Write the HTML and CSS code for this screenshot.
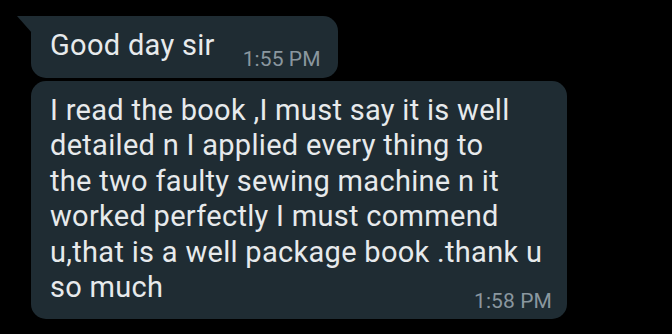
FILE: index.html
```html
<!DOCTYPE html>
<html>
<head>
<meta charset="utf-8">
<link rel="stylesheet" href="styles.css">
</head>
<body>
<div class="chat">
  <div class="bubble first">
    <svg class="tail" width="15" height="17" viewBox="0 0 15 17"><path d="M0 0 H15 V17 Z" fill="#1f2c33"/></svg>
    <div class="text short">Good day sir</div>
    <div class="time">1:55 PM</div>
  </div>
  <div class="bubble long">
    <div class="text">I read the book ,I must say it is well<br>detailed n I applied every thing to<br>the two faulty sewing machine n it<br>worked perfectly I must commend<br>u,that is a well package book .thank u<br>so much</div>
    <div class="time">1:58 PM</div>
  </div>
</div>
</body>
</html>
```
FILE: styles.css
```css
html, body {
  margin: 0;
  padding: 0;
  background: #000;
  width: 672px;
  height: 334px;
  overflow: hidden;
  font-family: Roboto, "Noto Sans", sans-serif;
}
.chat {
  display: flex;
  flex-direction: column;
  align-items: flex-start;
  padding: 16px 0 0 31px;
  gap: 3px;
}
.bubble {
  position: relative;
  background: #1f2c33;
  color: #e7eaec;
  border-radius: 15px;
  box-sizing: border-box;
}
.first {
  display: flex;
  align-items: flex-end;
  border-top-left-radius: 0;
  padding: 12px 17px 7px 19px;
}
.tail {
  position: absolute;
  left: -14px;
  top: 0;
}
.text {
  font-size: 29px;
  line-height: 35.5px;
  letter-spacing: 0.3px;
  white-space: nowrap;
}
.short {
  margin-bottom: 7px;
  margin-right: 28px;
}
.time {
  font-size: 21px;
  line-height: 24px;
  color: #8a979f;
  white-space: nowrap;
  letter-spacing: 0.1px;
}
.long {
  display: flex;
  flex-direction: column;
  width: 536px;
  padding: 12px 15px 6px 19px;
}
.long .time {
  align-self: flex-end;
  margin-top: -17px;
}
```
